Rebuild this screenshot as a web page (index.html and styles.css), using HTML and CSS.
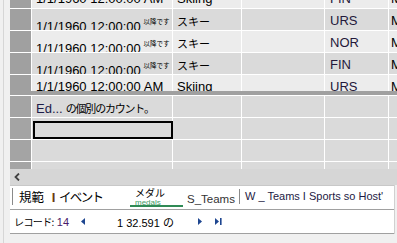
FILE: index.html
```html
<!DOCTYPE html>
<html lang="ja">
<head>
    <meta charset="UTF-8">
    <title>メダル</title>
    <link rel="stylesheet" href="styles.css">
</head>
<body>
    <div class="window">
        <div class="side"></div>
        <div class="main">
            <!-- Upper datasheet (scrolled) -->
            <div class="pane pane-top">
                <div class="grid grid-scrolled">
                    <div class="row light">
                        <div class="sel"></div>
                        <div class="cell">1/1/1960 12:00:00 AM</div>
                        <div class="cell">Skiing</div>
                        <div class="cell"></div>
                        <div class="cell code">FIN</div>
                        <div class="cell last">M</div>
                    </div>
                    <div class="row dark">
                        <div class="sel"></div>
                        <div class="cell">1/1/1960 12:00:00 <span class="tiny">以降です</span></div>
                        <div class="cell"><span class="ja">スキー</span></div>
                        <div class="cell"></div>
                        <div class="cell code">URS</div>
                        <div class="cell last">M</div>
                    </div>
                    <div class="row light">
                        <div class="sel"></div>
                        <div class="cell">1/1/1960 12:00:00 <span class="tiny">以降です</span></div>
                        <div class="cell"><span class="ja">スキー</span></div>
                        <div class="cell"></div>
                        <div class="cell code">NOR</div>
                        <div class="cell last">M</div>
                    </div>
                    <div class="row dark">
                        <div class="sel"></div>
                        <div class="cell">1/1/1960 12:00:00 <span class="tiny">以降です</span></div>
                        <div class="cell"><span class="ja">スキー</span></div>
                        <div class="cell"></div>
                        <div class="cell code">FIN</div>
                        <div class="cell last">M</div>
                    </div>
                    <div class="row light">
                        <div class="sel"></div>
                        <div class="cell">1/1/1960 12:00:00 AM</div>
                        <div class="cell">Skiing</div>
                        <div class="cell"></div>
                        <div class="cell code">URS</div>
                        <div class="cell last">M</div>
                    </div>
                </div>
            </div>

            <div class="splitter"></div>

            <!-- Lower datasheet (totals) -->
            <div class="pane pane-bottom">
                <div class="grid">
                    <div class="row total">
                        <div class="sel"></div>
                        <div class="cell"><span class="ed">Ed...</span><span class="ja tight">の個別のカウント。</span></div>
                        <div class="cell"></div>
                        <div class="cell"></div>
                        <div class="cell"></div>
                        <div class="cell last"></div>
                    </div>
                    <div class="row total">
                        <div class="sel"></div>
                        <div class="cell focus-cell"><div class="focus-box"></div></div>
                        <div class="cell"></div>
                        <div class="cell"></div>
                        <div class="cell"></div>
                        <div class="cell last"></div>
                    </div>
                    <div class="row total">
                        <div class="sel"></div>
                        <div class="cell"></div>
                        <div class="cell"></div>
                        <div class="cell"></div>
                        <div class="cell"></div>
                        <div class="cell last"></div>
                    </div>
                    <div class="row total">
                        <div class="sel"></div>
                        <div class="cell"></div>
                        <div class="cell"></div>
                        <div class="cell"></div>
                        <div class="cell"></div>
                        <div class="cell last"></div>
                    </div>
                </div>
            </div>

            <!-- Horizontal scrollbar -->
            <div class="hscroll">
                <svg class="chevron" viewBox="0 0 6 8" width="6" height="8">
                    <polyline points="5,0.5 1.5,4 5,7.5" fill="none" stroke="#404040" stroke-width="1.8" />
                </svg>
            </div>

            <div class="lower">
                <!-- Sheet tabs -->
                <div class="tabs">
                    <div class="tab tab-first">
                        <span class="tab-text"><span class="ja big">規範</span> <span class="bar">I</span> <span class="ja big kana">イベント</span></span>
                    </div>
                    <div class="tab tab-active">
                        <span class="ja small">メダル</span>
                        <span class="tab-sub">medals</span>
                    </div>
                    <div class="tab tab-teams">S_Teams</div>
                    <div class="tab tab-long">W _ Teams I Sports so Host'</div>
                </div>

                <!-- Record navigation -->
                <div class="nav">
                    <span class="ja nav-label">レコード:</span>
                    <span class="nav-count">14</span>
                    <svg class="nav-icon prev" viewBox="0 0 4 7" width="4" height="7"><polygon points="4,0 0,3.5 4,7" /></svg>
                    <span class="nav-pos">1 32.591 <span class="ja">の</span></span>
                    <svg class="nav-icon next" viewBox="0 0 4 7" width="4" height="7"><polygon points="0,0 4,3.5 0,7" /></svg>
                    <svg class="nav-icon last-rec" viewBox="0 0 7 7" width="7" height="7"><polygon points="0,0 4,3.5 0,7" /><rect x="5" y="0" width="1.6" height="7" /></svg>
                </div>
            </div>
        </div>
    </div>
</body>
</html>
```

FILE: styles.css
```css
* {
    margin: 0;
    padding: 0;
    box-sizing: border-box;
}

body {
    font-family: "Liberation Sans", "Noto Sans CJK JP", sans-serif;
    font-size: 13px;
    color: #000;
    background: #f0f0f0;
    width: 397px;
    height: 243px;
    overflow: hidden;
}

.window {
    display: flex;
    height: 243px;
}

.side {
    width: 10px;
    flex-shrink: 0;
    background: #f0f0f0;
    box-shadow: inset 3px 0 #f0f0f0, inset 4px 0 #d6d6d6;
}

.main {
    flex: 1;
    display: flex;
    flex-direction: column;
    min-width: 0;
}

/* Datasheet panes */
.pane {
    overflow: hidden;
    background: #fff;
}

.pane-top {
    height: 91px;
}

.pane-bottom {
    height: 74px;
    padding-top: 1px;
}

.grid {
    display: flex;
    flex-direction: column;
    gap: 1px;
}

.grid-scrolled {
    margin-top: -13px;
}

.row {
    display: grid;
    grid-template-columns: 21px 140px 68px 82px 63px 1fr;
    column-gap: 1px;
    height: 21px;
}

.sel {
    background: #a0a0a0;
}

.cell {
    padding: 3px 0 0 4px;
    line-height: 18px;
    white-space: nowrap;
    overflow: hidden;
}

.row.light .cell {
    background: #ececec;
}

.row.dark .cell {
    background: #dadada;
}

.row.total .cell {
    background: #dadada;
}

.row.total .sel {
    background: #a4a4a4;
}

.code {
    padding-left: 5px;
    color: #24183a;
}

.cell.last {
    padding-left: 2px;
}

.ja {
    font-family: "Noto Sans CJK JP", sans-serif;
    font-size: 11px;
}

.ja.tight {
    letter-spacing: -1.2px;
    margin-left: 3px;
}

.tiny {
    font-family: "Noto Sans CJK JP", sans-serif;
    font-size: 6.5px;
    vertical-align: 7px;
    margin-left: -1px;
}

.ed {
    color: #1c1c48;
}

.focus-cell {
    overflow: visible;
    padding: 3px 0 0 1px;
}

.focus-box {
    width: 140px;
    height: 18px;
    border: 2px solid #000;
}

.splitter {
    height: 4px;
    background: #a0a0a0;
}

/* Horizontal scrollbar */
.hscroll {
    height: 16px;
    background: #d6d6d6;
    display: flex;
    align-items: center;
    padding-left: 4px;
}

.chevron {
    display: block;
}

.lower {
    margin-right: 2px;
    border-right: 1px solid #d0d0d0;
}

/* Sheet tabs */
.tabs {
    height: 24px;
    background: #fff;
    border-top: 1px solid #c8c8c8;
    display: flex;
    align-items: stretch;
}

.tab {
    white-space: nowrap;
    display: flex;
    align-items: center;
}

.tab-first {
    width: 118px;
    margin: 2px 0 4px 2px;
    padding-left: 6px;
    border-left: 1px solid #8a8a8a;
}

.ja.big {
    font-size: 12.5px;
}

.ja.kana {
    letter-spacing: -1.6px;
}

.bar {
    font-weight: bold;
    color: #6b3a10;
    margin: 0 0 0 4px;
}

.tab-active {
    width: 53px;
    flex-direction: column;
    align-items: flex-start;
    padding: 1px 0 0 5px;
    border-bottom: 2px solid #2f8a55;
    margin-bottom: 2px;
}

.ja.small {
    font-size: 10px;
    line-height: 11px;
    height: 11px;
}

.tab-sub {
    margin-top: 2px;
    font-size: 8px;
    line-height: 6px;
    height: 5px;
    overflow: hidden;
    color: #3d9a64;
}

.tab-teams {
    width: 57px;
    padding: 4px 0 0 4px;
    font-size: 11.5px;
    color: #333;
    border-right: 1px solid #8a8a8a;
    margin: 3px 0 5px;
}

.tab-long {
    padding-left: 5px;
    font-size: 11px;
    color: #1d1a44;
    margin-bottom: 3px;
}

/* Record navigation */
.nav {
    height: 25px;
    background: #fff;
    border-top: 1px solid #a0a0a0;
    border-bottom: 1px solid #a0a0a0;
    display: flex;
    align-items: center;
    padding-left: 4px;
    font-size: 11px;
}

.nav-label {
    font-size: 10px;
    letter-spacing: -0.6px;
}

.nav-count {
    margin-left: 3px;
    color: #4a1a6a;
}

.nav-icon {
    display: block;
    fill: #1e4690;
}

.prev {
    margin-left: 12px;
}

.nav-pos {
    margin-left: 32px;
}

.next {
    margin-left: 24px;
}

.last-rec {
    margin-left: 13px;
}
```
